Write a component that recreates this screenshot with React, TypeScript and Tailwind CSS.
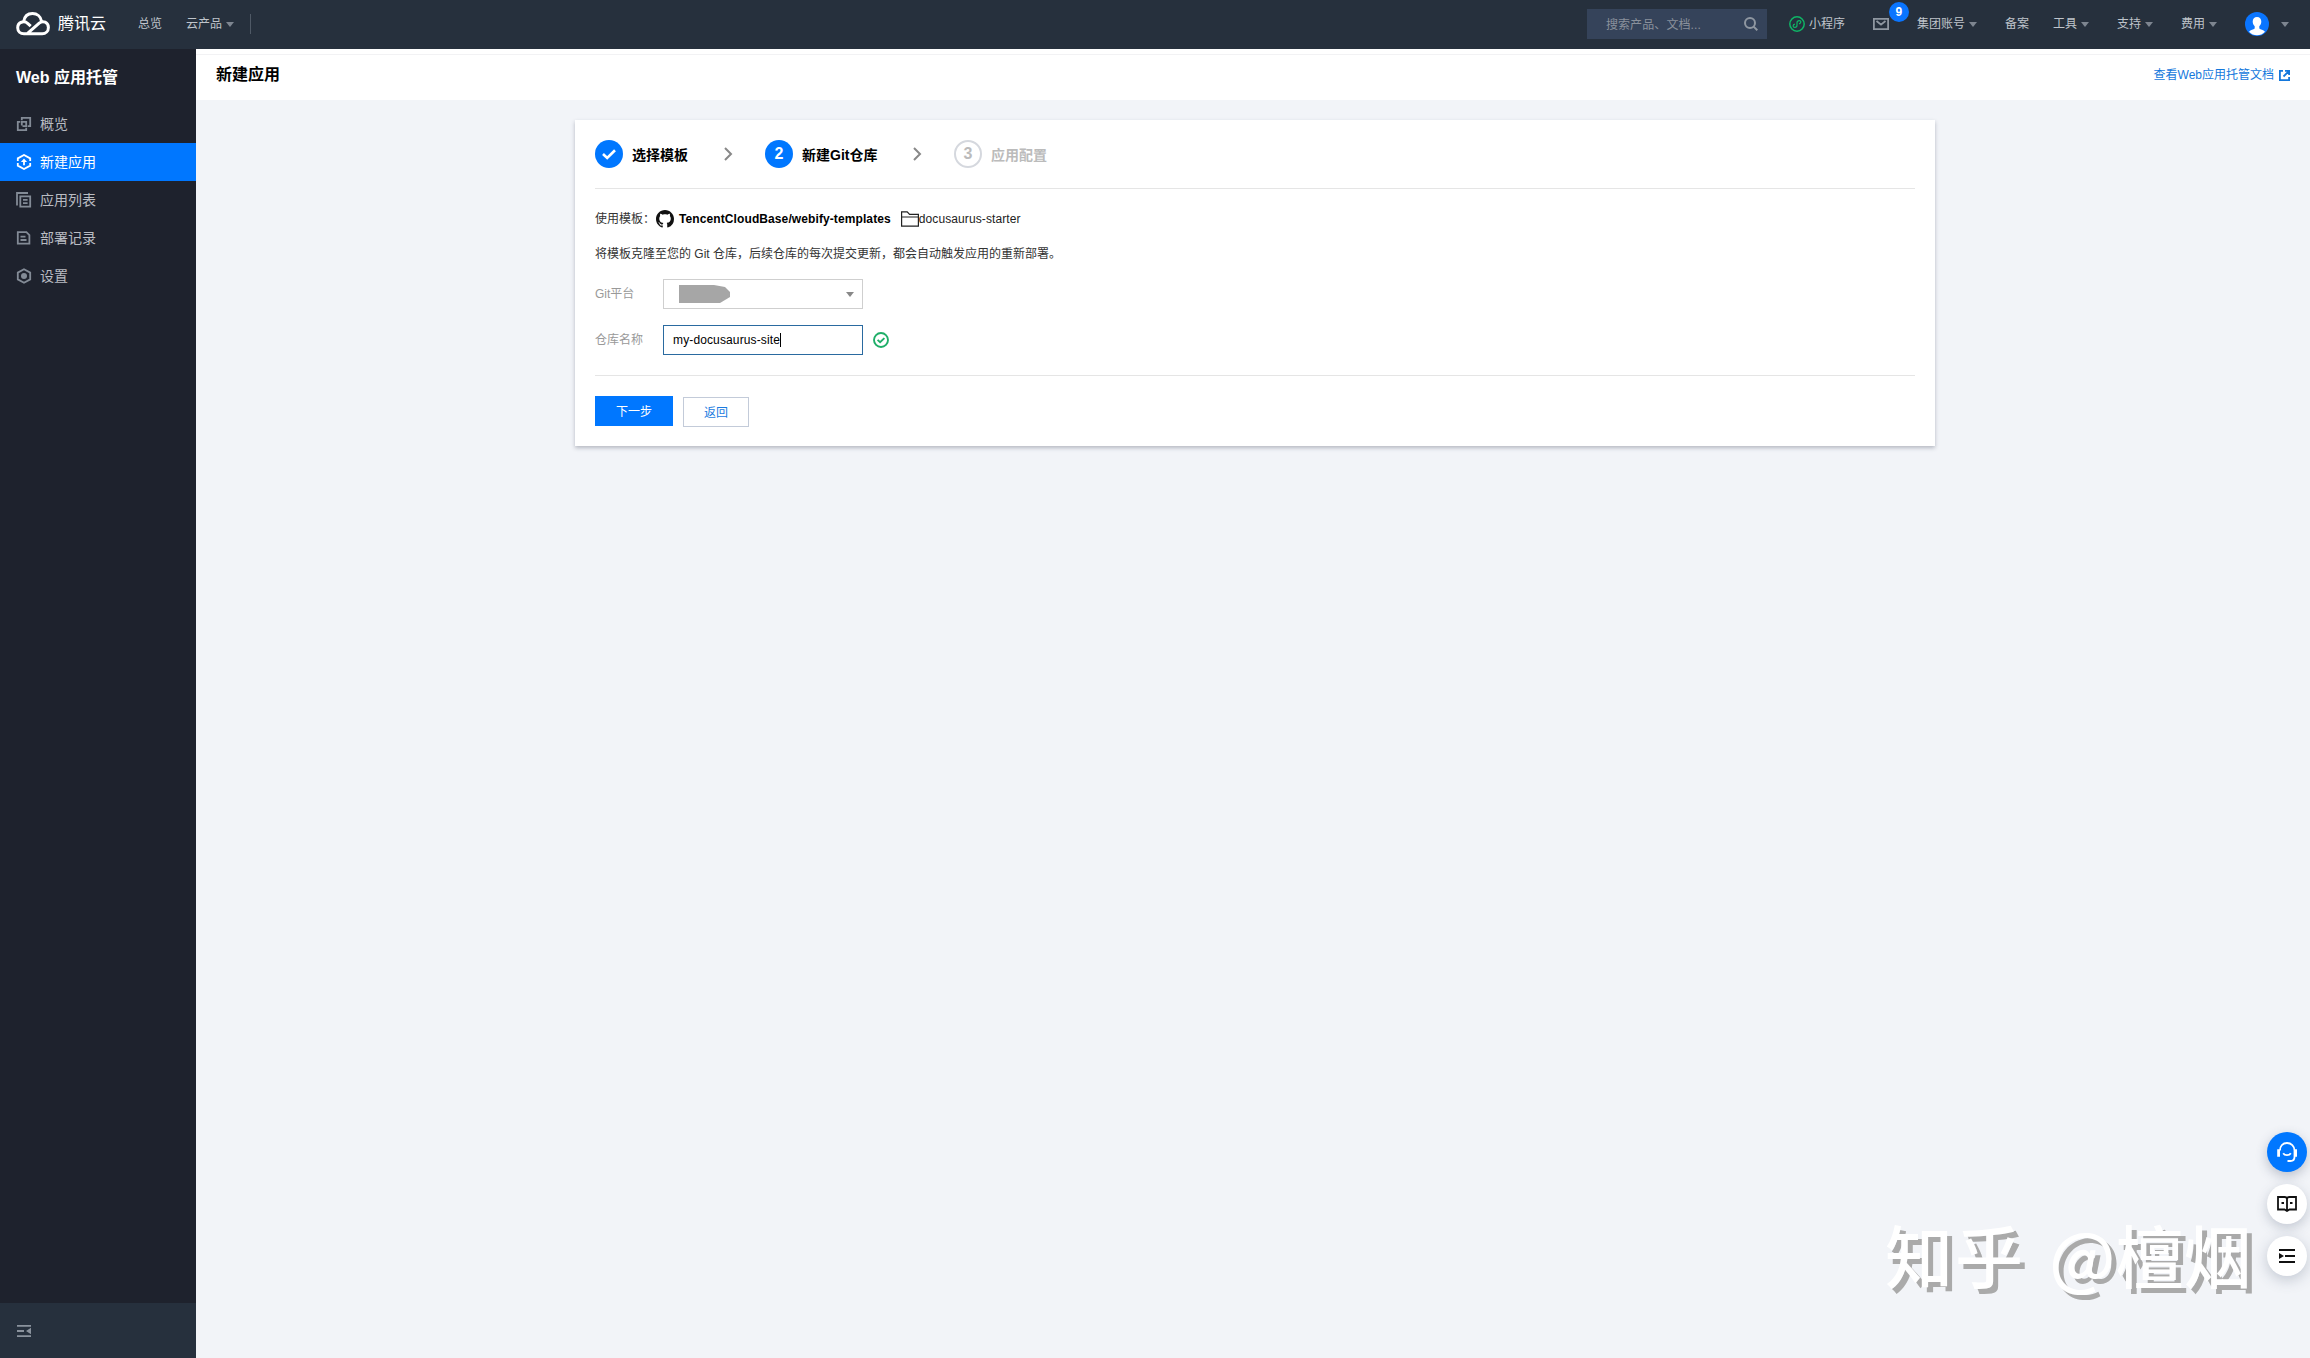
import React from 'react';

interface MenuItem {
  label: string;
  icon: React.ReactNode;
  active?: boolean;
}

const menu: MenuItem[] = [
  {
    label: '概览',
    icon: (
      <>
        <path d="M5.8 4.300V1.800h8.400v8.400h-2.500" />
        <path d="M4.300 5.800H1.800v8.400h8.400v-2.500" />
        <path d="M5.800 9.500V5.800h4.400v4.400H6.500" />
      </>
    ),
  },
  {
    label: '新建应用',
    active: true,
    icon: (
      <>
        <path d="M1.800 7V4.400L8 1l6.200 3.400V7M1.800 9v2.600L8 15l6.200-3.400V9" />
        <path d="M8 11.200V7" />
        <path d="M8 4.500 4.900 8h6.200z" fill="currentColor" stroke="none" />
      </>
    ),
  },
  {
    label: '应用列表',
    icon: (
      <>
        <path d="M1 13.500V1h11" />
        <path d="M4.300 4.300h9.900v10.400H4.300zM7 7.800h4.600M7 11.200h4.600" />
      </>
    ),
  },
  {
    label: '部署记录',
    icon: <path d="M1.800 2.200h8.600l3 3v8.500H1.800zM4.500 6.700h5M4.500 10h6" />,
  },
  {
    label: '设置',
    icon: (
      <>
        <path d="M8 1.200l6.200 3.400v6.800L8 14.800l-6.200-3.400V4.600z" />
        <circle cx="8" cy="8" r="3" fill="currentColor" stroke="none" />
      </>
    ),
  },
];

const Caret: React.FC<{ className?: string }> = ({ className = '' }) => (
  <svg className={`w-2 h-[5px] shrink-0 ${className}`} viewBox="0 0 8 5" fill="currentColor">
    <path d="M0 0h8L4 5z" />
  </svg>
);

const Chevron: React.FC = () => (
  <svg className="w-[9px] h-[14px]" viewBox="0 0 9 14" fill="none" stroke="#888" strokeWidth="2">
    <path d="M1 1l6 6-6 6" />
  </svg>
);

const Header: React.FC = () => (
  <header className="h-[49px] shrink-0 flex items-center bg-[#26303d] text-xs text-[#bfc4cb] pl-4 pr-[21px] pb-px">
    <svg className="w-[34px] h-6" viewBox="0 0 34 24" fill="none" stroke="#fff" strokeWidth="3">
      <path d="M11 21.8 23.2 11.2c3.8-3.3 9.2-.8 9.2 4.4 0 3.6-2.7 6.2-6.2 6.2H8c-3.600 0-6.300-2.500-6.300-6 0-5.800 6.500-7.600 10.200-4.200l2.800 2.500" />
      <path d="M7.700 9.600C8.500 4.500 12 1.600 16.500 1.600c4.600 0 8.200 2.900 9 7.600" />
    </svg>
    <span className="ml-2 text-base text-white whitespace-nowrap">腾讯云</span>
    <span className="ml-8">总览</span>
    <span className="ml-6">云产品</span>
    <Caret className="ml-1 text-[#7d8590]" />
    <span className="ml-4 w-px h-5 bg-[#4f5966]" />

    <div className="ml-auto w-[180px] h-[30px] pl-[19px] pr-[9px] flex items-center justify-between bg-[#35435a] text-[#8a919c]">
      <span className="tracking-[0.1px] pt-px">搜索产品、文档...</span>
      <svg className="w-[14px] h-[14px]" viewBox="0 0 14 14" fill="none" stroke="#8f97a1" strokeWidth="2">
        <circle cx="6" cy="6" r="5" />
        <path d="M9.600 9.600 13.300 13.300" />
      </svg>
    </div>
    <svg className="ml-[22px] w-4 h-4" viewBox="0 0 16 16" fill="none" stroke="#0fb566" strokeWidth="1.500">
      <circle cx="8" cy="8" r="7.200" />
      <path d="M5.900 8.200c-2.400.4-2.300 3.200-.1 3.200 1.400 0 2.200-.9 2.200-2.100V6.700c0-1.300.9-2.100 2.200-2.100 2.200 0 2.200 2.800-.2 3.200" strokeWidth="1.200" />
    </svg>
    <span className="ml-1">小程序</span>
    <div className="relative ml-[28px]">
      <svg className="w-4 h-3" viewBox="0 0 16 12" fill="none" stroke="#8f97a1" strokeWidth="1.800">
        <path d="M.9.9h14.200v10.200H.9zM3.500 3l4.500 3.600L12.500 3" />
      </svg>
      <span className="absolute -top-4 left-4 w-5 h-5 rounded-full bg-[#0a75ff] text-white font-bold flex items-center justify-center">9</span>
    </div>
    <span className="ml-[28px]">集团账号</span>
    <Caret className="ml-1 text-[#7d8590]" />
    <span className="ml-7">备案</span>
    <span className="ml-6">工具</span>
    <Caret className="ml-1 text-[#7d8590]" />
    <span className="ml-7">支持</span>
    <Caret className="ml-1 text-[#7d8590]" />
    <span className="ml-7">费用</span>
    <Caret className="ml-1 text-[#7d8590]" />
    <svg className="ml-7 w-6 h-6" viewBox="0 0 24 24">
      <circle cx="12" cy="12" r="12" fill="#0a75ff" />
      <path d="M12 5c-2.700 0-4.300 1.800-4.300 4.500 0 2.200.8 3.700 2 4.700v2.200c-1.200 1-4 1.400-5.700 3.300 2.100 2.400 5 3.600 8 3.600s5.900-1.200 8-3.600c-1.700-1.900-4.500-2.300-5.700-3.300v-2.200c1.200-1 2-2.500 2-4.700C16.300 6.800 14.700 5 12 5z" fill="#fff" />
    </svg>
    <Caret className="ml-3 text-[#7d8590]" />
  </header>
);

const Sidebar: React.FC = () => (
  <aside className="w-[196px] shrink-0 flex flex-col bg-[#1e222d]">
    <h2 className="h-14 pt-0.5 pl-4 flex items-center text-base font-bold text-white">Web 应用托管</h2>
    <nav>
      {menu.map((item) => (
        <div
          key={item.label}
          className={`h-[38px] pl-4 flex items-center gap-2 text-sm ${
            item.active ? 'bg-[#0077ff] text-white' : 'text-[#b9bcc2]'
          }`}
        >
          <svg
            className={`w-4 h-4 ${item.active ? 'text-white' : 'text-[#838b96]'}`}
            viewBox="0 0 16 16"
            fill="none"
            stroke="currentColor"
            strokeWidth="1.800"
          >
            {item.icon}
          </svg>
          {item.label}
        </div>
      ))}
    </nav>
    <div className="mt-auto h-[55px] pl-[17px] flex items-center bg-[#26303d]">
      <svg className="w-[14px] h-3" viewBox="0 0 14 12" fill="#8a929d">
        <path d="M0 0h14v1.800H0zM0 5.100h7v1.800H0zM0 10.200h14V12H0zM14 2.800v6.400L9 6z" />
      </svg>
    </div>
  </aside>
);

const Steps: React.FC = () => (
  <div className="flex items-center border-b border-[#e5e5e5] pb-5 text-sm font-bold">
    <div className="w-[129px] h-7 flex items-center gap-[9px]">
      <span className="w-7 h-7 rounded-full bg-[#0077ff] flex items-center justify-center">
        <svg className="w-[14px] h-[11px]" viewBox="0 0 14 11" fill="none" stroke="#fff" strokeWidth="2.600">
          <path d="M1 5l4.200 4L13 1.300" />
        </svg>
      </span>
      <span className="pt-0.5">选择模板</span>
    </div>
    <div className="w-[41px] h-7 flex items-center">
      <Chevron />
    </div>
    <div className="w-[148px] h-7 flex items-center gap-[9px] whitespace-nowrap">
      <span className="w-7 h-7 rounded-full bg-[#0077ff] text-white text-base flex items-center justify-center">2</span>
      <span className="pt-0.5">新建Git仓库</span>
    </div>
    <div className="w-[41px] h-7 flex items-center">
      <Chevron />
    </div>
    <div className="h-7 flex items-center gap-[9px] text-[#bbb]">
      <span className="w-7 h-7 rounded-full border-2 border-[#d5d8de] text-base flex items-center justify-center">3</span>
      <span className="pt-0.5">应用配置</span>
    </div>
  </div>
);

const CreateRepoCard: React.FC = () => (
  <section className="w-[1360px] h-[326px] ml-[379px] mt-5 p-5 bg-white text-xs shadow-[0_2px_4px_rgba(54,58,80,0.32)]">
    <Steps />

    <div className="mt-5 h-5 flex items-center text-black">
      <span className="w-[61px] text-[#333]">使用模板：</span>
      <svg className="w-[18px] h-[18px]" viewBox="0 0 16 16" fill="#111">
        <path d="M8 0C3.580 0 0 3.580 0 8c0 3.540 2.290 6.530 5.470 7.590.4.070.55-.17.55-.38 0-.19-.01-.82-.01-1.490-2.010.37-2.530-.49-2.690-.94-.09-.23-.48-.94-.82-1.130-.28-.15-.68-.52-.01-.53.63-.01 1.080.58 1.230.82.72 1.210 1.870.87 2.330.66.07-.52.28-.87.51-1.070-1.780-.2-3.640-.89-3.640-3.950 0-.87.31-1.590.82-2.150-.08-.2-.36-1.020.08-2.120 0 0 .67-.21 2.200.82.64-.18 1.320-.27 2-.27s1.360.09 2 .27c1.530-1.040 2.200-.82 2.200-.82.44 1.100.16 1.920.08 2.120.51.56.82 1.270.82 2.150 0 3.070-1.870 3.750-3.650 3.950.29.25.54.73.54 1.480 0 1.070-.01 1.930-.01 2.200 0 .21.15.46.55.38A8.010 8.010 0 0 0 16 8c0-4.420-3.580-8-8-8z" />
      </svg>
      <b className="ml-[5px] tracking-[0.1px]">TencentCloudBase/webify-templates</b>
      <svg className="ml-[10px] w-[18px] h-[16px]" viewBox="0 0 18 16" fill="none" stroke="#222" strokeWidth="1.200">
        <path d="M.6 15.200V.8h5.600l2.400 2.600h8.800v11.800zM.6 6h16.800" />
      </svg>
      <span className="text-[#222] tracking-[0.1px]">docusaurus-starter</span>
    </div>

    <p className="mt-[15px] h-5 flex items-center text-[#333]">
      将模板克隆至您的 Git 仓库，后续仓库的每次提交更新，都会自动触发应用的重新部署。
    </p>

    <div className="mt-[15px] h-[30px] flex items-center">
      <label className="w-[68px] text-[#999]">Git平台</label>
      <div className="w-[200px] h-[30px] border border-[#cfcfcf] pl-[15px] pr-2 flex items-center justify-between text-[#888]">
        <svg className="w-[52px] h-[18px]" viewBox="0 0 52 18" fill="#a6a6a6">
          <path d="M0 0h35l11 2 5 5v5l-5 3-5 3H0z" />
        </svg>
        <Caret />
      </div>
    </div>

    <div className="mt-4 h-[30px] flex items-center">
      <label className="w-[68px] text-[#999]">仓库名称</label>
      <div className="w-[200px] h-[30px] border border-[#2a6aa0] pl-[9px] flex items-center text-black tracking-[0.13px]">
        my-docusaurus-site
        <span className="w-px h-[14px] bg-black" />
      </div>
      <svg className="ml-[10px] w-4 h-4" viewBox="0 0 16 16" fill="none" stroke="#1fae68" strokeWidth="1.900">
        <circle cx="8" cy="8" r="7" />
        <path d="M4.600 7.900l2.500 2.400 4.300-4.200" />
      </svg>
    </div>

    <div className="mt-5 border-t border-[#e5e5e5] pt-5 flex items-start gap-[10px]">
      <button className="w-[78px] h-[30px] pt-0.5 bg-[#0077ff] text-white">下一步</button>
      <button className="mt-px w-[66px] h-[30px] pt-0.5 border border-[#c3cbd9] text-[#1a7be0]">返回</button>
    </div>
  </section>
);

const FloatingTools: React.FC = () => (
  <div className="absolute right-[3px] top-[1132px] flex flex-col gap-3">
    <div className="w-10 h-10 rounded-full bg-[#0077ff] flex items-center justify-center shadow-[0_4px_12px_rgba(55,70,100,0.3)]">
      <svg className="w-[22px] h-[22px]" viewBox="0 0 22 22" fill="none" stroke="#fff" strokeWidth="1.800">
        <path d="M4 9.500C4 5 6.800 2 11 2s7.500 3 7.500 7.500V16c0 2.400-1.500 4-4 4H11.500" />
        <path d="M2.600 8.300v7.400M19.600 8.300v7.400" strokeWidth="2.800" />
        <path d="M7.200 12.200c1.500 2.600 6 2.600 7.600 0" />
      </svg>
    </div>
    <div className="w-10 h-10 rounded-full bg-white flex items-center justify-center shadow-[0_4px_12px_rgba(55,70,100,0.25)]">
      <svg className="w-5 h-4" viewBox="0 0 20 16" fill="none" stroke="#111" strokeWidth="1.800">
        <path d="M1 1h6.500C9 1 10 2 10 3.200 10 2 11 1 12.500 1H19v12.500h-6.500L10 15l-2.500-1.500H1zM10 3v12M4.500 7H7M13 7h2.500" />
      </svg>
    </div>
    <div className="w-10 h-10 rounded-full bg-white flex items-center justify-center shadow-[0_4px_14px_rgba(55,70,100,0.25)]">
      <svg className="w-4 h-[14px]" viewBox="0 0 16 14" fill="#111">
        <path d="M0 0h16v2H0zM6 6h10v2H6zM0 12h16v2H0zM0 4l5 3-5 3z" />
      </svg>
    </div>
  </div>
);

const App: React.FC = () => (
  <div className="relative w-[2310px] h-[1358px] flex flex-col overflow-hidden bg-[#f2f4f8] font-['Liberation_Sans','Noto_Sans_CJK_SC',sans-serif]">
    <Header />
    <div className="flex-1 flex">
      <Sidebar />
      <main className="flex-1">
        <div className="h-[51px] flex flex-col bg-white">
          <div className="h-[5px] border-b border-[#f2f2f4] box-content" />
          <div className="flex-1 pl-5 pr-5 pb-[5px] flex items-center justify-between">
            <h1 className="text-base font-bold text-black">新建应用</h1>
            <a className="flex items-center gap-[5px] text-xs text-[#1478dc]">
              查看Web应用托管文档
              <svg className="w-[11px] h-[11px]" viewBox="0 0 11 11" fill="none" stroke="currentColor" strokeWidth="1.800">
                <path d="M4 .9H.9v9.200h9.200V7M6 .9h4.100V5M10 1 4.500 6.500" />
              </svg>
            </a>
          </div>
        </div>
        <CreateRepoCard />
      </main>
    </div>
    <div className="absolute left-[1885px] top-[1204px] text-[68px] leading-[100px] font-medium [word-spacing:9px] whitespace-nowrap text-white [text-shadow:5px_5px_0_#aaa] font-['Noto_Sans_CJK_SC',sans-serif]">
      <span className="tracking-[2px]">知乎</span> @檀烟
    </div>
    <FloatingTools />
  </div>
);

export default App;
